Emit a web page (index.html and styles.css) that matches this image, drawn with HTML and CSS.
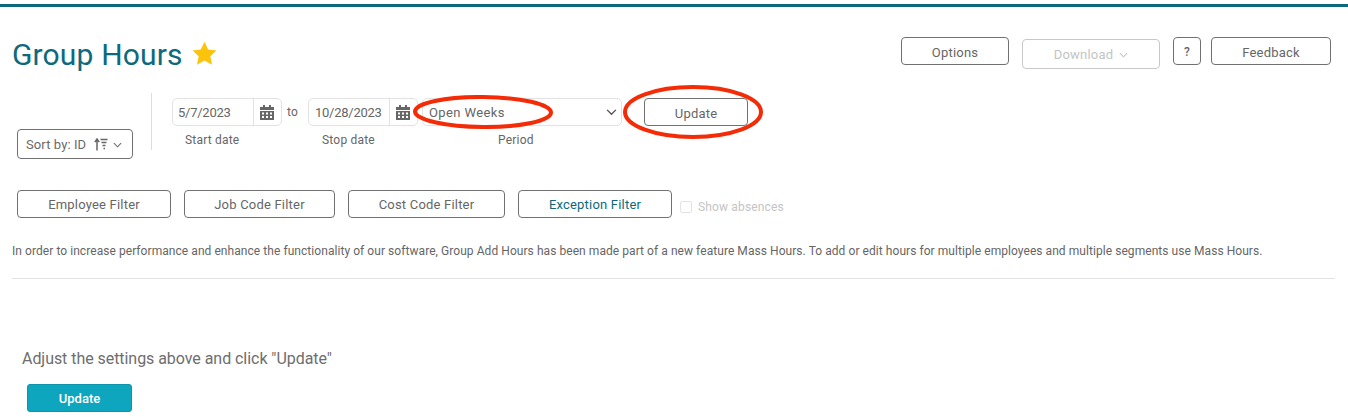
FILE: index.html
```html
<!DOCTYPE html>
<html lang="en">
<head>
<meta charset="utf-8">
<title>Group Hours</title>
<link rel="stylesheet" href="styles.css">
</head>
<body>
<div class="topbar"></div>
<main class="page">
  <header class="header">
    <div class="title-wrap">
      <h1 class="title">Group Hours</h1>
      <svg class="star" viewBox="0 0 24 24" width="25" height="25"><path d="M12 .8l3.500 7.400 8 1-5.900 5.500 1.600 8L12 18.800l-7.200 3.900 1.600-8L.5 9.200l8-1z" fill="#fcc30b"/></svg>
    </div>
    <div class="actions">
      <button class="btn btn-options"><span>Options</span></button>
      <button class="btn btn-download"><span>Download</span>
        <svg class="chev" viewBox="0 0 10 6" width="9" height="6"><path d="M1 1l4 4 4-4" fill="none" stroke="currentColor" stroke-width="1.2"/></svg>
      </button>
      <button class="btn btn-help"><span>?</span></button>
      <button class="btn btn-feedback"><span>Feedback</span></button>
    </div>
  </header>

  <section class="controls">
    <button class="btn btn-sort"><span>Sort by: ID</span>
      <svg class="sort-icon" viewBox="0 0 14 13" width="14" height="13"><path d="M3 12.500V2M.8 4.200L3 1l2.200 3.200" fill="none" stroke="#666" stroke-width="1.500"/><path d="M6.500 1.500h7M7.500 4.500h5M8.500 7.500h3M9.500 10.500h1.500" fill="none" stroke="#666" stroke-width="1.400"/></svg>
      <svg class="chev" viewBox="0 0 10 6" width="9" height="6"><path d="M1 1l4 4 4-4" fill="none" stroke="currentColor" stroke-width="1.2"/></svg>
    </button>
    <div class="divider"></div>
    <div class="fields">
      <div class="field">
        <div class="date-input">
          <span class="date-value">5/7/2023</span>
          <span class="date-addon">
            <svg viewBox="0 0 14 15" width="14" height="15"><path d="M3 0h2v2h4V0h2v2h3v3H0V2h3zM0 6h14v9H0zm2 1.500v2h2v-2zm4 0v2h2v-2zm4 0v2h2v-2zm-8 3.500v2h2v-2zm4 0v2h2v-2zm4 0v2h2v-2z" fill="#666" fill-rule="evenodd"/></svg>
          </span>
        </div>
        <label class="field-label label-start">Start date</label>
      </div>
      <span class="to">to</span>
      <div class="field">
        <div class="date-input">
          <span class="date-value date-stop">10/28/2023</span>
          <span class="date-addon">
            <svg viewBox="0 0 14 15" width="14" height="15"><path d="M3 0h2v2h4V0h2v2h3v3H0V2h3zM0 6h14v9H0zm2 1.500v2h2v-2zm4 0v2h2v-2zm4 0v2h2v-2zm-8 3.500v2h2v-2zm4 0v2h2v-2zm4 0v2h2v-2z" fill="#666" fill-rule="evenodd"/></svg>
          </span>
        </div>
        <label class="field-label label-stop">Stop date</label>
      </div>
      <div class="field field-period">
        <div class="select">
          <span>Open Weeks</span>
          <svg viewBox="0 0 12 8" width="11" height="7"><path d="M1 1l5 5 5-5" fill="none" stroke="#555" stroke-width="1.600"/></svg>
        </div>
        <label class="field-label label-period">Period</label>
        <svg class="mark mark-period" viewBox="0 0 140 34" width="140" height="34"><ellipse cx="70" cy="17" rx="68" ry="15" fill="none" stroke="#f32b07" stroke-width="4" transform="rotate(0.500 70 17)"/></svg>
      </div>
      <div class="field-update">
        <button class="btn btn-update"><span>Update</span></button>
        <svg class="mark mark-update" viewBox="0 0 140 54" width="140" height="54"><ellipse cx="70" cy="27" rx="68" ry="25" fill="none" stroke="#f32b07" stroke-width="4"/></svg>
      </div>
    </div>
  </section>

  <section class="filters">
    <button class="btn btn-employee"><span>Employee Filter</span></button>
    <button class="btn btn-job"><span>Job Code Filter</span></button>
    <button class="btn btn-cost"><span>Cost Code Filter</span></button>
    <button class="btn btn-exception"><span>Exception Filter</span></button>
    <label class="absences"><span class="checkbox"></span>Show absences</label>
  </section>

  <p class="notice">In order to increase performance and enhance the functionality of our software, Group Add Hours has been made part of a new feature Mass Hours. To add or edit hours for multiple employees and multiple segments use Mass Hours.</p>
  <hr class="rule">

  <section class="empty">
    <p class="empty-text">Adjust the settings above and click "Update"</p>
    <button class="btn-primary">Update</button>
  </section>
</main>
</body>
</html>
```
FILE: styles.css
```css
* { box-sizing: border-box; }
html, body { margin: 0; padding: 0; }
body {
  background: #fff;
  color: #666;
  font-family: Roboto, "Liberation Sans", sans-serif;
  font-size: 13px;
  overflow: hidden;
}
.topbar { height: 3px; margin-top: 4px; background: #0d6a7d; }
.page { padding: 0 13px 0 12px; }

.header { display: flex; justify-content: space-between; align-items: flex-start; padding-top: 30px; padding-right: 4px; }
.title-wrap { display: flex; align-items: center; gap: 9px; margin-top: 1px; }
.title { margin: 0; font-size: 30px; font-weight: 400; line-height: 34px; letter-spacing: .15px; color: #0d6a7d; }
.star { margin-top: -4px; }

.actions { display: flex; align-items: flex-start; }
.btn {
  display: inline-flex; align-items: center; justify-content: center;
  height: 28px; padding: 1px 0 0;
  background: #fff; border: 1px solid #717171; border-radius: 4px;
  color: #666; font: 400 13px Roboto, "Liberation Sans", sans-serif;
  letter-spacing: .2px;
}
.btn-options { width: 108px; margin-right: 13px; padding-top: 2px; }
.btn-download { width: 138px; height: 30px; margin-top: 2px; margin-right: 13px; color: #c4c4c4; border-color: #c8c8c8; gap: 6px; }
.btn-help { width: 28px; margin-right: 10px; font-size: 12px; font-weight: 500; }
.btn-feedback { width: 120px; padding-top: 2px; }

.controls { display: flex; align-items: flex-start; padding-left: 5px; margin-top: 21px; height: 66px; }
.btn-sort { width: 116px; height: 30px; margin-top: 36px; gap: 0; color: #6a6a6a; letter-spacing: .1px; justify-content: flex-start; padding-left: 8px; }
.sort-icon { margin-left: 8px; margin-right: 5px; }
.divider { width: 1px; height: 57px; margin-left: 18px; background: #ddd; }
.fields { display: flex; align-items: flex-start; margin-left: 20px; padding-top: 5px; }
.field { position: relative; display: flex; flex-direction: column; }
.date-input { display: flex; width: 110px; height: 28px; border: 1px solid #e3e3e3; border-radius: 5px; }
.date-value { flex: 1; padding-left: 5px; line-height: 28px; font-size: 13px; letter-spacing: -.25px; color: #666; }
.date-stop { padding-left: 6px; }
.date-addon { width: 28px; display: flex; align-items: center; justify-content: center; padding-right: 2px; border-left: 1px solid #e3e3e3; }
.to { width: 26px; padding-left: 5px; line-height: 28px; font-size: 12px; letter-spacing: .2px; }
.field-label { font-size: 12px; line-height: 14px; margin-top: 7px; letter-spacing: .2px; }
.label-start { padding-left: 13px; }
.label-stop { padding-left: 14px; }
.field-period { margin-left: 4px; }
.select { display: flex; align-items: center; justify-content: space-between; width: 200px; height: 28px; padding: 0 4px 0 6px; border: 1px solid #e3e3e3; border-radius: 5px; font-size: 13px; letter-spacing: .4px; }
.label-period { padding-left: 76px; }
.field-update { position: relative; margin-left: 22px; }
.btn-update { width: 104px; padding-top: 2px; }
.mark { position: absolute; pointer-events: none; }
.mark-period { left: -9px; top: -3px; }
.mark-update { left: -21px; top: -13px; }

.filters { display: flex; align-items: flex-start; padding-left: 5px; margin-top: 31px; }
.filters .btn { margin-right: 13px; }
.btn-employee { width: 154px; }
.btn-job { width: 151px; }
.btn-cost { width: 157px; }
.filters .btn-exception { width: 154px; color: #0d6a7d; margin-right: 8px; }
.absences { display: flex; align-items: center; gap: 6px; height: 28px; margin-top: 3px; font-size: 12px; color: #c4c4c4; letter-spacing: .15px; }
.checkbox { width: 12px; height: 12px; border: 1px solid #e3e3e3; border-radius: 2px; }

.notice { margin: 23px 0 0; font-size: 12px; line-height: 14px; letter-spacing: .06px; color: #666; }
.rule { margin: 20px 0 0; border: 0; border-top: 1px solid #e3e3e3; }

.empty { padding-left: 10px; }
.empty-text { margin: 71px 0 0; font-size: 16px; line-height: 18px; letter-spacing: -.05px; color: #6e6e6e; }
.btn-primary { display: block; width: 105px; height: 28px; margin: 16px 0 0 5px; padding: 0; background: #0ea5bf; border: 1px solid #0b94ac; border-radius: 3px; color: #fff; font: 500 13px Roboto, "Liberation Sans", sans-serif; }
```
